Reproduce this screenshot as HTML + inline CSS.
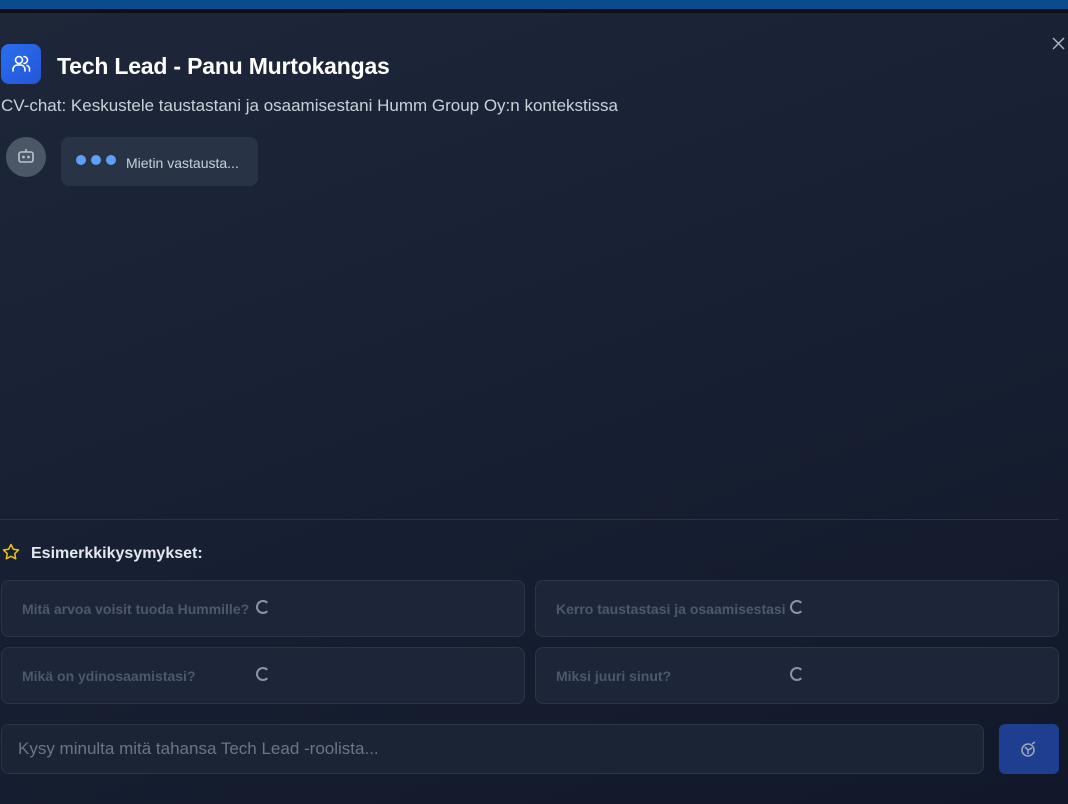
<!DOCTYPE html>
<html><head><meta charset="utf-8"><style>
*{box-sizing:border-box;margin:0;padding:0}
body{width:1068px;height:804px;overflow:hidden;font-family:"Liberation Sans",sans-serif;background:linear-gradient(160deg,#1e2739 0%,#172033 50%,#111829 100%);position:relative;color:#fff}
.top{position:absolute;left:0;top:0;width:1068px;height:9px;background:#0a4a8f}
.top2{position:absolute;left:0;top:9px;width:1068px;height:4px;background:#0b0f18}
.abs{position:absolute}
.card{position:absolute;height:57px;border:1px solid #2b3547;border-radius:8px;background:#1c2638;color:#4d596b;font-weight:bold;font-size:14px;padding:0 0 0 20px;line-height:57px}
.spin{position:absolute;width:14px;height:14px;border:2px solid #8a93a2;border-right-color:transparent;border-radius:50%}
</style></head><body>
<div class="top"></div><div class="top2"></div>
<svg class="abs" style="left:1052px;top:37px" width="13" height="13" viewBox="0 0 13 13" stroke="#b0b7c3" stroke-width="1.4"><path d="M1 1l11 11M12 1L1 12"/></svg>
<div class="abs" style="left:1px;top:44px;width:40px;height:40px;border-radius:8px;background:linear-gradient(135deg,#2a6ef0,#2456d6)">
<svg width="40" height="40" viewBox="0 0 40 40" fill="none" stroke="#fff" stroke-width="1.6" stroke-linecap="round"><circle cx="18" cy="16" r="3.5"/><path d="M12 27v-1.5a4.5 4.5 0 0 1 4.5-4.5h3a4.5 4.5 0 0 1 4.5 4.5V27"/><path d="M23 12.5a3.5 3.5 0 0 1 0 7"/><path d="M26 21.5a4 4 0 0 1 2.5 3.8V27"/></svg></div>
<div class="abs" style="left:57px;top:53px;font-size:23px;font-weight:bold;letter-spacing:-0.2px">Tech Lead - Panu Murtokangas</div>
<div class="abs" style="left:1px;top:96px;font-size:17px;color:#c9d0da">CV-chat: Keskustele taustastani ja osaamisestani Humm Group Oy:n kontekstissa</div>
<div class="abs" style="left:6px;top:137px;width:40px;height:40px;border-radius:50%;background:#4b5667">
<svg width="40" height="40" viewBox="0 0 40 40" fill="none" stroke="#bcc3cd" stroke-width="1.6"><rect x="13" y="15" width="14" height="10" rx="2"/><path d="M20 15v-3"/><circle cx="17.5" cy="20" r=".6"/><circle cx="22.5" cy="20" r=".6"/></svg></div>
<div class="abs" style="left:61px;top:137px;width:197px;height:49px;border-radius:8px;background:#283345"></div>
<div class="abs" style="left:76px;top:155px;width:10px;height:10px;border-radius:50%;background:#5ea0f5"></div>
<div class="abs" style="left:91px;top:155px;width:10px;height:10px;border-radius:50%;background:#5ea0f5"></div>
<div class="abs" style="left:106px;top:155px;width:10px;height:10px;border-radius:50%;background:#5ea0f5"></div>
<div class="abs" style="left:126px;top:155px;font-size:14px;color:#c9d0da">Mietin vastausta...</div>
<div class="abs" style="left:0;top:519px;width:1059px;height:1px;background:#2a3446"></div>
<svg class="abs" style="left:2px;top:543px" width="18" height="18" viewBox="0 0 24 24" fill="none" stroke="#f2c511" stroke-width="2" stroke-linejoin="round"><path d="M12 2l3.1 6.3 6.9 1-5 4.9 1.2 6.8L12 17.8 5.8 21l1.2-6.8-5-4.9 6.9-1z"/></svg>
<div class="abs" style="left:31px;top:545px;font-size:16px;font-weight:bold;color:#e5e9ef">Esimerkkikysymykset:</div>
<div class="card" style="left:1px;top:580px;width:524px">Mitä arvoa voisit tuoda Hummille?</div>
<div class="card" style="left:535px;top:580px;width:524px">Kerro taustastasi ja osaamisestasi</div>
<div class="card" style="left:1px;top:647px;width:524px">Mikä on ydinosaamistasi?</div>
<div class="card" style="left:535px;top:647px;width:524px">Miksi juuri sinut?</div>
<div class="spin" style="left:256px;top:600px"></div>
<div class="spin" style="left:790px;top:600px"></div>
<div class="spin" style="left:256px;top:667px"></div>
<div class="spin" style="left:790px;top:667px"></div>
<div class="abs" style="left:1px;top:724px;width:983px;height:50px;border:1px solid #2b3547;border-radius:8px;background:#1b2435;color:#6b7585;font-size:17px;line-height:48px;padding-left:16px">Kysy minulta mitä tahansa Tech Lead -roolista...</div>
<div class="abs" style="left:999px;top:724px;width:60px;height:50px;border-radius:6px;background:#1e3f8f">
<svg width="60" height="50" viewBox="0 0 60 50" fill="none" stroke="#9aa3b3" stroke-width="1.6"><circle cx="29" cy="26" r="6"/><path d="M29 26l-3 -3M29 26v4M29 26l4-2M33 20l3-2"/></svg></div>
</body></html>
